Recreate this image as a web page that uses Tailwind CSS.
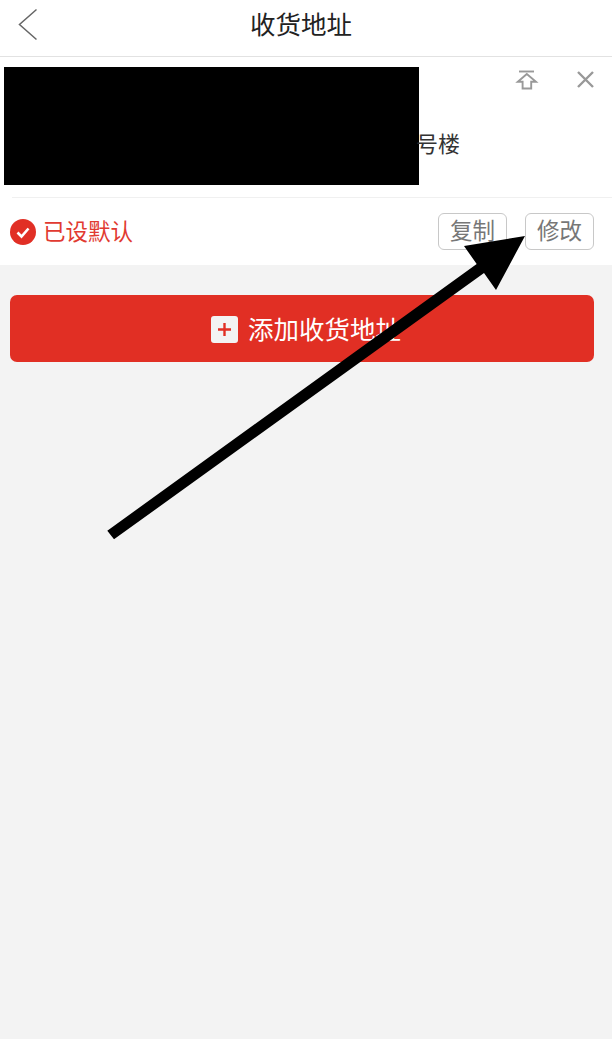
<!DOCTYPE html>
<html lang="zh-CN">
<head>
<meta charset="utf-8">
<script src="https://cdn.jsdelivr.net/npm/@tailwindcss/browser@4"></script>
</head>
<body class="m-0 bg-[#f3f3f3] font-['Noto_Sans_CJK_SC','Noto_Sans',sans-serif]">
<div class="relative w-[612px] h-[1039px] overflow-hidden bg-[#f3f3f3]">
  <header class="relative flex items-center justify-center h-[57px] bg-white border-b border-[#e2e2e2]">
    <svg class="absolute left-[17px] top-[8px]" width="22" height="33" viewBox="0 0 22 33" fill="none" stroke="#666" stroke-width="1.5"><path d="M19.5 1.5 2.5 16.5 19.5 31.5"/></svg>
    <h1 class="text-[25.5px] leading-none font-normal text-[#222] mb-[10px] mr-[10px]">收货地址</h1>
  </header>
  <section class="bg-white h-[208px] flex flex-col">
    <div class="relative h-[140px] shrink-0">
      <div class="absolute left-[4px] top-[10px] w-[414.5px] h-[118px] bg-black"></div>
      <p class="absolute left-[416px] top-[72px] text-[22px] leading-[26px] text-[#333]">号楼</p>
      <svg class="absolute left-[515px] top-[12px]" width="24" height="24" viewBox="0 0 24 24" fill="none" stroke="#999" stroke-width="1.9"><path d="M4 2.5H19"/><path d="M11.8 5 2.8 12.8H7.6V19.5H16.2V12.8H21Z"/></svg>
      <svg class="absolute left-[576px] top-[13px]" width="19" height="19" viewBox="0 0 19 19" fill="none" stroke="#999" stroke-width="2.4"><path d="M2 2 17 17M17 2 2 17"/></svg>
    </div>
    <div class="ml-[12px] h-px bg-[#f0f0f0] shrink-0"></div>
    <div class="flex items-center flex-1 pl-[10px] pr-[18px] pb-[1px]">
      <svg width="26" height="26" viewBox="0 0 26 26" class="shrink-0 mt-[1px]"><circle cx="13" cy="13" r="13" fill="#e12f25"/><path d="M7.5 13.5 11.5 17.5 18.5 9.5" fill="none" stroke="#fff" stroke-width="2.6"/></svg>
      <span class="ml-[7px] mb-[2px] text-[22.5px] leading-none text-[#e13a31]">已设默认</span>
      <button class="ml-auto w-[69px] h-[37px] rounded-[6px] border border-[#c8c8c8] bg-white text-[22.5px] leading-none text-[#777] pb-[3px]">复制</button>
      <button class="ml-[18px] w-[69px] h-[37px] rounded-[6px] border border-[#c8c8c8] bg-white text-[22.5px] leading-none text-[#777] pb-[3px]">修改</button>
    </div>
  </section>
  <div class="px-[10px] pt-[30px]">
    <button class="flex items-center justify-center w-[584px] h-[67px] rounded-[7px] bg-[#e12f24] text-white text-[25.5px] leading-none pl-[8px]">
      <span class="flex items-center justify-center w-[27px] h-[27px] rounded-[3px] bg-[#f3f3f3] mr-[10px] mt-[1px]">
        <svg width="13" height="13" viewBox="0 0 13 13" stroke="#e12f24" stroke-width="2.4"><path d="M6.5 0V13M0 6.5H13"/></svg>
      </span>
      <span class="mb-[1px]">添加收货地址</span>
    </button>
  </div>
  <svg class="absolute inset-0 pointer-events-none" width="612" height="1039" viewBox="0 0 612 1039"><path d="M107.3 530.7 476.7 264 464 246 525 236 496 290 484 273 114 539.3Z" fill="#000"/></svg>
</div>
</body>
</html>
